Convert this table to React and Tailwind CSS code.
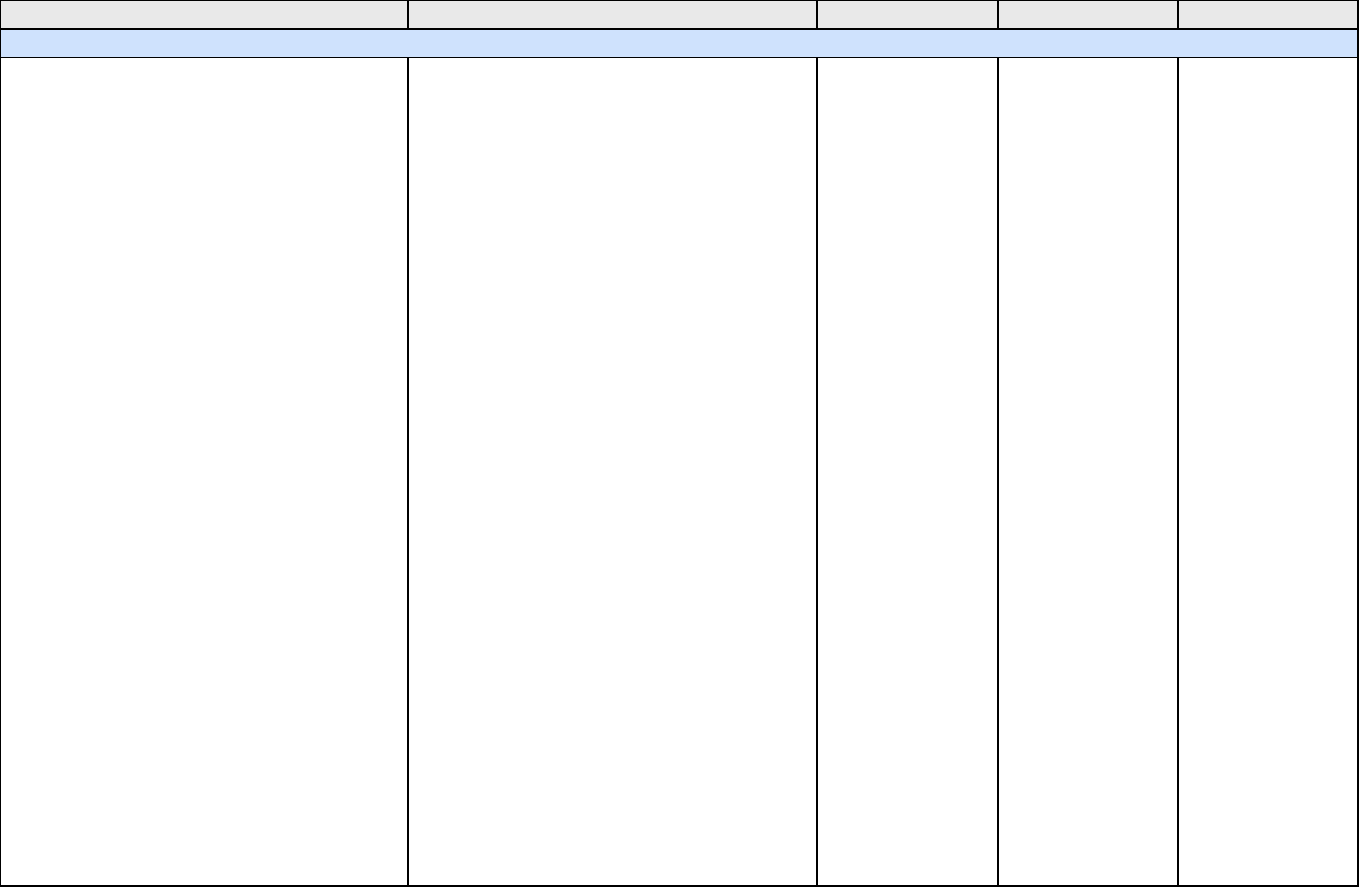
const cols = ['w-[408px]', 'w-[409px]', 'w-[181px]', 'w-[180px]', 'flex-1']

function Row({ className }) {
  return (
    <div className={`flex ${className}`}>
      {cols.map((w, i) => (
        <div
          key={i}
          className={`${w} h-full ${i < cols.length - 1 ? 'border-r-2 border-black' : ''}`}
        />
      ))}
    </div>
  )
}

export default function App() {
  return (
    <div className="w-[1359px] bg-white font-['Liberation_Sans',sans-serif]">
      <div className="border-l border-r-2 border-black">
        {/* Column header */}
        <Row className="h-[30px] border-t border-b-2 border-black bg-[#e9e9e9]" />

        {/* Group band */}
        <div className="h-[28px] border-b border-black bg-[#cfe2fd]" />

        {/* Body */}
        <Row className="h-[829px] border-b-2 border-black" />
      </div>
    </div>
  )
}
